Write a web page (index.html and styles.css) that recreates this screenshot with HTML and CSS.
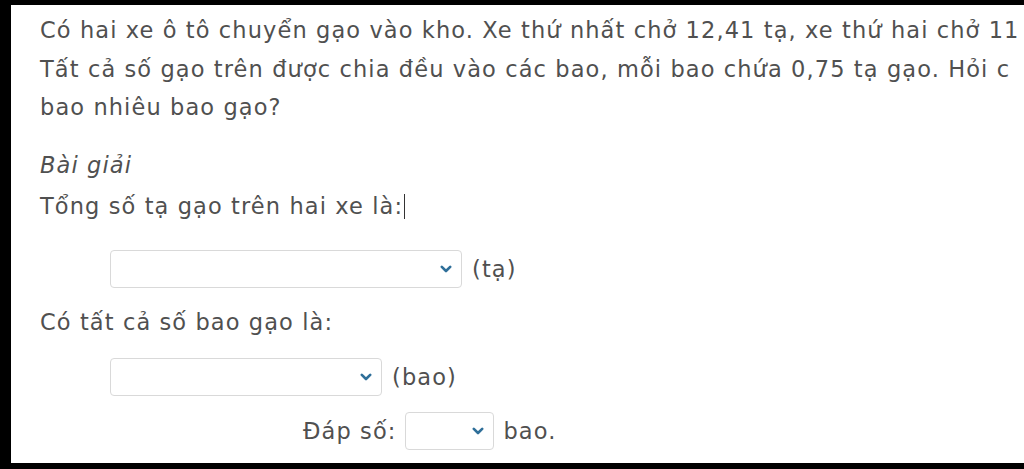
FILE: index.html
```html
<!DOCTYPE html>
<html lang="vi">
<head>
    <meta charset="UTF-8">
    <title>Bài giải</title>
    <link rel="stylesheet" href="styles.css">
</head>
<body>
    <div class="sheet">
        <p class="question">
            Có hai xe ô tô chuyển gạo vào kho. Xe thứ nhất chở 12,41 tạ, xe thứ hai chở 11<br>
            Tất cả số gạo trên được chia đều vào các bao, mỗi bao chứa 0,75 tạ gạo. Hỏi c<br>
            bao nhiêu bao gạo?
        </p>
        <p class="heading">Bài giải</p>

        <p class="line">Tổng số tạ gạo trên hai xe là:<span class="caret"></span></p>
        <div class="row first">
            <div class="pick wide">
                <svg width="12" height="8" viewBox="0 0 12 8"><path d="M1.8 1.8 L6 6 L10.2 1.8" fill="none" stroke="#2f6f99" stroke-width="2.6" stroke-linecap="round" stroke-linejoin="round"/></svg>
            </div>
            <span class="unit">(tạ)</span>
        </div>

        <p class="line second">Có tất cả số bao gạo là:</p>
        <div class="row third">
            <div class="pick mid">
                <svg width="12" height="8" viewBox="0 0 12 8"><path d="M1.8 1.8 L6 6 L10.2 1.8" fill="none" stroke="#2f6f99" stroke-width="2.6" stroke-linecap="round" stroke-linejoin="round"/></svg>
            </div>
            <span class="unit">(bao)</span>
        </div>

        <div class="row answer">
            <span class="label">Đáp số:</span>
            <div class="pick small">
                <svg width="12" height="8" viewBox="0 0 12 8"><path d="M1.8 1.8 L6 6 L10.2 1.8" fill="none" stroke="#2f6f99" stroke-width="2.6" stroke-linecap="round" stroke-linejoin="round"/></svg>
            </div>
            <span class="unit">bao.</span>
        </div>
    </div>
</body>
</html>
```

FILE: styles.css
```css
body {
    margin: 0;
    background: #000;
    font-family: "DejaVu Sans", Verdana, sans-serif;
    color: #505050;
    height: 469px;
    overflow: hidden;
}

.sheet {
    margin: 5px 0 0 11px;
    height: 458px;
    background: #fff;
    padding: 6px 0 0 29px;
    box-sizing: border-box;
    overflow: hidden;
    font-size: 22.5px;
    letter-spacing: 1.1px;
}

p {
    margin: 0;
}

.question {
    line-height: 38.5px;
    white-space: nowrap;
}

.heading {
    font-style: italic;
    margin-top: 19px;
    line-height: 38px;
}

.line {
    line-height: 38px;
    margin-top: 3px;
}

.caret {
    display: inline-block;
    width: 1px;
    height: 25px;
    background: #333;
    vertical-align: -5px;
    margin-left: 1px;
}

.row {
    display: flex;
    align-items: center;
    gap: 10px;
    padding-left: 70px;
}

.row.first {
    margin-top: 25px;
}

.second {
    margin-top: 15px;
}

.row.third {
    margin-top: 17px;
}

.row.answer {
    padding-left: 263px;
    margin-top: 16px;
    gap: 9px;
}

.pick {
    height: 38px;
    box-sizing: border-box;
    border: 1px solid #d9d9d9;
    border-radius: 4px;
    display: flex;
    align-items: center;
    justify-content: flex-end;
    padding-right: 9px;
    background: #fff;
}

.pick.wide {
    width: 352px;
}

.pick.mid {
    width: 272px;
}

.pick.small {
    width: 89px;
}

.unit, .label {
    line-height: 38px;
}
```
